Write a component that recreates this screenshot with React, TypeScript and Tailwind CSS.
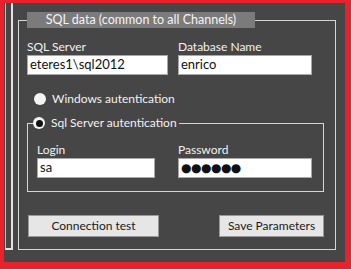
import React from "react";

function Radio({ checked }: { checked?: boolean }) {
  return (
    <span className="flex h-[12px] w-[12px] shrink-0 items-center justify-center rounded-full bg-[#f4f4f4]">
      {checked ? <span className="h-[7px] w-[7px] rounded-full bg-[#111]" /> : null}
    </span>
  );
}

function Field({ label, value, width, password }: { label: string; value: string; width: string; password?: boolean }) {
  return (
    <div className={`flex flex-col ${width}`}>
      <div className="h-[14px] text-[12px] leading-[14px] text-[#f2f2f2] mb-[1px]">{label}</div>
      <div className="flex h-[20px] items-center border border-[#a8a8a8] bg-white pl-[2px] text-[13px] text-[#111]">
        {password ? (
          <span className="text-[12px] leading-none tracking-[-0.5px]" style={{ fontFamily: '"DejaVu Sans", sans-serif' }}>
            ●●●●●●
          </span>
        ) : (
          value
        )}
      </div>
    </div>
  );
}

export default function App() {
  return (
    <div
      className="flex h-[269px] w-[351px] border-[#e8212b] border-t-[3px] border-l-[4px] border-r-[6px] border-b-[7px] bg-[#464646]"
      style={{ fontFamily: 'Lato, "Liberation Sans", sans-serif' }}
    >
      <div className="ml-[1px] h-[247px] w-[8px] shrink-0 border-l border-b-[2px] border-r-[2px] border-l-[#bdbdbd] border-b-[#e2e2e2] border-r-[#e2e2e2]" />
      <fieldset className="ml-[5px] mt-[9px] h-[238px] w-[317px] shrink-0 border border-[#d6d6d6] p-0">
        <legend className="ml-[8px] flex h-[16px] w-[228px] items-center justify-center bg-[#7b7b7b] p-0 text-[12.5px] text-[#f4f4f4]">
          SQL data (common to all Channels)
        </legend>
        <div className="flex flex-col pl-[8px] pr-[11px] pt-[12px]">
          <div className="flex">
            <Field label="SQL Server" value="eteres1\sql2012" width="w-[141px]" />
            <Field label="Database Name" value="enrico" width="w-[134px] ml-[10px]" />
          </div>
          <div className="mt-[17px] flex h-[14px] items-center pl-[7px]">
            <Radio />
            <span className="ml-[6px] text-[12px] text-[#f2f2f2]">Windows autentication</span>
          </div>
          <fieldset className="mt-[10px] w-[297px] border border-[#d6d6d6] p-0">
            <legend className="ml-[5px] flex h-[14px] items-center p-0 pr-[2px]">
              <Radio checked />
              <span className="ml-[6px] text-[12px] text-[#f2f2f2]">Sql Server autentication</span>
            </legend>
            <div className="flex pl-[9px] pt-[13px] pb-[13px]">
              <Field label="Login" value="sa" width="w-[118px]" />
              <Field label="Password" value="" width="w-[134px] ml-[23px]" password />
            </div>
          </fieldset>
          <div className="mt-[23px] flex justify-between pl-[1px]">
            <button className="h-[22px] w-[131px] border border-[#9a9a9a] bg-[#e6e6e6] text-[12px] text-[#1a1a1a]">
              Connection test
            </button>
            <button className="h-[22px] w-[105px] border border-[#9a9a9a] bg-[#e6e6e6] text-[12px] text-[#1a1a1a]">
              Save Parameters
            </button>
          </div>
        </div>
      </fieldset>
    </div>
  );
}
